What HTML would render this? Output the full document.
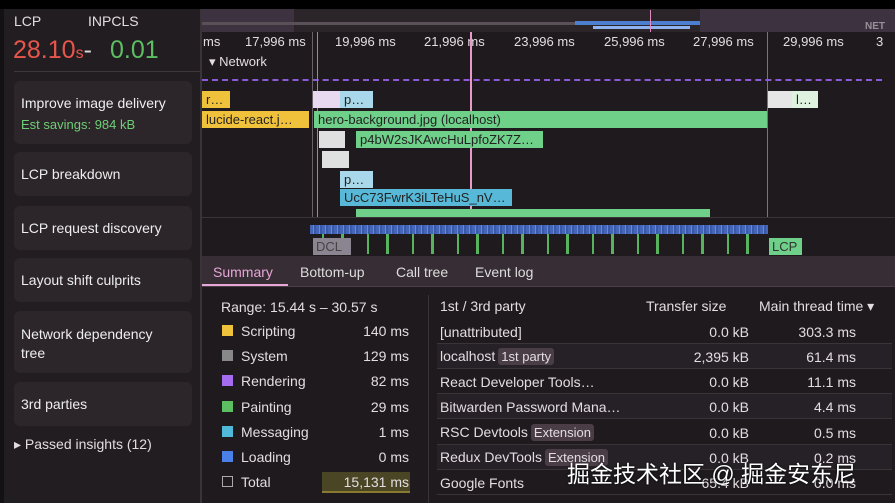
<!DOCTYPE html><html><head><meta charset="utf-8"><style>
*{margin:0;padding:0;box-sizing:border-box}
body{width:895px;height:503px;overflow:hidden;background:#1e1a1e;font-family:"Liberation Sans",sans-serif;color:#e3dde2;position:relative}
.a{position:absolute;white-space:nowrap}
.card{position:absolute;left:14px;width:178px;background:#2c2529;border-radius:6px;font-size:14px;color:#eee;padding:0 7px}
.bar{position:absolute;height:17px;font-size:13px;color:#222;padding-left:4px;line-height:17px;overflow:hidden;white-space:nowrap}
.sw{position:absolute;left:222px;width:11px;height:11px}
.lb{position:absolute;left:241px;font-size:14px}
.v{position:absolute;right:486px;font-size:14px}
.row{position:absolute;left:437px;width:455px;height:25px;border-bottom:1px solid #3a3338}
.row>span{position:absolute;top:5px;font-size:14px;white-space:nowrap}
.tag{position:static;background:#4a3d46;border-radius:3px;padding:1px 3px;font-size:13px;margin-left:3px}
</style></head><body>
<div class="a" style="left:0;top:0;width:895px;height:9px;background:#000"></div>
<div class="a" style="left:0;top:9px;width:4px;height:494px;background:#141114"></div>
<div class="a" style="left:4px;top:9px;width:197px;height:494px;background:#221d21"></div>
<div class="a" style="left:14px;top:13px;font-size:14px">LCP</div>
<div class="a" style="left:88px;top:13px;font-size:14px">INPCLS</div>
<div class="a" style="left:13px;top:36px;font-size:25px;color:#e8564b">28.10<span style="font-size:16px">s</span><span style="color:#ddd">-</span></div>
<div class="a" style="left:110px;top:36px;font-size:25px;color:#5cbf62">0.01</div>
<div class="a" style="left:14px;top:71px;width:186px;height:1px;background:#3d363b"></div>
<div class="card" style="top:81px;height:63px;padding-top:14px">Improve image delivery<div style="color:#6fcf77;margin-top:6px;font-size:13px">Est savings: 984 kB</div></div>
<div class="card" style="top:152px;height:44px;line-height:44px">LCP breakdown</div>
<div class="card" style="top:206px;height:44px;line-height:44px">LCP request discovery</div>
<div class="card" style="top:258px;height:44px;line-height:44px">Layout shift culprits</div>
<div class="card" style="top:311px;height:62px;padding-top:14px;line-height:19px">Network dependency<br>tree</div>
<div class="card" style="top:382px;height:44px;line-height:44px">3rd parties</div>
<div class="a" style="left:14px;top:436px;font-size:14px">▸ Passed insights (12)</div>
<div class="a" style="left:200px;top:9px;width:2px;height:494px;background:#3a3338"></div>
<div class="a" style="left:202px;top:9px;width:693px;height:23px;background:#2b2429"></div>
<div class="a" style="left:202px;top:9px;width:92px;height:23px;background:#3d3340"></div>
<div class="a" style="left:700px;top:9px;width:195px;height:23px;background:#3d3340"></div>
<div class="a" style="left:202px;top:22px;width:490px;height:3px;background:#5a5058"></div>
<div class="a" style="left:575px;top:21px;width:125px;height:4px;background:#4d7fd0"></div>
<div class="a" style="left:593px;top:26px;width:97px;height:3px;background:#8fb4f0"></div>
<div class="a" style="left:650px;top:10px;width:1px;height:22px;background:#e08cc0"></div>
<div class="a" style="left:865px;top:21px;font-size:10px;color:#9a8f98;font-weight:bold">NET</div>
<div class="a" style="left:202px;top:32px;width:693px;height:190px;background:#1e1a1e"></div>
<div class="a" style="left:203px;top:34px;font-size:13px">ms</div>
<div class="a" style="left:245px;top:34px;font-size:13px">17,996 ms</div>
<div class="a" style="left:335px;top:34px;font-size:13px">19,996 ms</div>
<div class="a" style="left:424px;top:34px;font-size:13px">21,996 ms</div>
<div class="a" style="left:514px;top:34px;font-size:13px">23,996 ms</div>
<div class="a" style="left:604px;top:34px;font-size:13px">25,996 ms</div>
<div class="a" style="left:693px;top:34px;font-size:13px">27,996 ms</div>
<div class="a" style="left:783px;top:34px;font-size:13px">29,996 ms</div>
<div class="a" style="left:876px;top:34px;font-size:13px">3</div>
<div class="a" style="left:209px;top:54px;font-size:13px">▾ Network</div>
<div class="a" style="left:202px;top:79px;width:680px;border-top:2px dashed #8a5ad8"></div>
<div class="a" style="left:312px;top:32px;width:1px;height:225px;background:#6a6068"></div>
<div class="a" style="left:317px;top:32px;width:1px;height:225px;background:#58b35e"></div>
<div class="a" style="left:470px;top:32px;width:2px;height:225px;background:#e89ac8"></div>
<div class="a" style="left:767px;top:32px;width:1px;height:225px;background:#777"></div>
<div class="bar" style="left:202px;top:91px;width:28px;background:#f0c23c">r…</div>
<div class="bar" style="left:313px;top:91px;width:27px;background:#e8d8f0"></div>
<div class="bar" style="left:340px;top:91px;width:33px;background:#a8d8ea">p…</div>
<div class="bar" style="left:202px;top:111px;width:107px;background:#f0c23c">lucide-react.j…</div>
<div class="bar" style="left:314px;top:111px;width:453px;background:#6fd08a">hero-background.jpg (localhost)</div>
<div class="bar" style="left:768px;top:91px;width:24px;background:#e6e6e6"></div>
<div class="bar" style="left:792px;top:91px;width:26px;background:#dff2df">l…</div>
<div class="bar" style="left:319px;top:131px;width:26px;background:#e0e0e0"></div>
<div class="bar" style="left:356px;top:131px;width:187px;background:#6fd08a">p4bW2sJKAwcHuLpfoZK7Z…</div>
<div class="bar" style="left:322px;top:151px;width:27px;background:#e0e0e0"></div>
<div class="bar" style="left:340px;top:171px;width:33px;background:#a8d8ea">p…</div>
<div class="bar" style="left:340px;top:189px;width:172px;background:#58b8d8">UcC73FwrK3iLTeHuS_nV…</div>
<div class="bar" style="left:356px;top:209px;width:354px;height:8px;background:#6fd08a"></div>
<div class="a" style="left:202px;top:217px;width:693px;height:5px;background:#1e1a1e;border-top:1px solid #3a3338"></div>
<div class="a" style="left:202px;top:222px;width:693px;height:34px;background:#1e1a1e"></div>
<div class="a" style="left:310px;top:225px;width:458px;height:9px;background:repeating-linear-gradient(90deg,#4466bb 0 3px,#6a88d8 3px 4px,#3a5aa8 4px 6px)"></div>
<div class="a" style="left:310px;top:234px;width:458px;height:20px;background:repeating-linear-gradient(90deg,transparent 0 12px,#58b35e 12px 14px,transparent 14px 31px,#58b35e 31px 34px,transparent 34px 45px)"></div>
<div class="a" style="left:313px;top:238px;width:38px;height:17px;background:#8a8590;color:#444;font-size:13px;line-height:17px;padding-left:3px">DCL</div>
<div class="a" style="left:769px;top:238px;width:33px;height:17px;background:#6fd08a;color:#333;font-size:13px;line-height:17px;padding-left:3px">LCP</div>
<div class="a" style="left:202px;top:256px;width:693px;height:31px;background:#372d35;border-bottom:1px solid #4a3f47"></div>
<div class="a" style="left:213px;top:264px;font-size:14px;color:#e6a6d6">Summary</div>
<div class="a" style="left:202px;top:284px;width:86px;height:2px;background:#e6a6d6"></div>
<div class="a" style="left:300px;top:264px;font-size:14px;color:#ddd">Bottom-up</div>
<div class="a" style="left:396px;top:264px;font-size:14px;color:#ddd">Call tree</div>
<div class="a" style="left:475px;top:264px;font-size:14px;color:#ddd">Event log</div>
<div class="a" style="left:428px;top:295px;width:1px;height:208px;background:#3a3338"></div>
<div class="a" style="left:221px;top:299px;font-size:14px">Range: 15.44 s – 30.57 s</div>
<div class="sw" style="top:325px;background:#f0c23c"></div><div class="lb" style="top:323px">Scripting</div><div class="v" style="top:323px">140 ms</div>
<div class="sw" style="top:350px;background:#888"></div><div class="lb" style="top:348px">System</div><div class="v" style="top:348px">129 ms</div>
<div class="sw" style="top:375px;background:#a66cf0"></div><div class="lb" style="top:373px">Rendering</div><div class="v" style="top:373px">82 ms</div>
<div class="sw" style="top:401px;background:#5cbf62"></div><div class="lb" style="top:399px">Painting</div><div class="v" style="top:399px">29 ms</div>
<div class="sw" style="top:426px;background:#50b8d8"></div><div class="lb" style="top:424px">Messaging</div><div class="v" style="top:424px">1 ms</div>
<div class="sw" style="top:451px;background:#4a80e8"></div><div class="lb" style="top:449px">Loading</div><div class="v" style="top:449px">0 ms</div>
<div class="sw" style="top:476px;border:1px solid #aaa"></div><div class="lb" style="top:474px">Total</div>
<div class="a" style="left:322px;top:472px;width:88px;height:21px;background:#4a4524;border-bottom:2px solid #8a7a30"></div><div class="v" style="top:474px">15,131 ms</div>
<div class="a" style="left:440px;top:298px;font-size:14px">1st / 3rd party</div>
<div class="a" style="left:646px;top:298px;font-size:14px">Transfer size</div>
<div class="a" style="left:759px;top:298px;font-size:14px">Main thread time ▾</div>
<div class="row" style="top:319px"><span style="left:3px">[unattributed]</span><span style="right:143px">0.0 kB</span><span style="right:36px">303.3 ms</span></div>
<div class="row" style="top:344px;background:#262126"><span style="left:3px;top:4px">localhost<span class="tag">1st party</span></span><span style="right:143px">2,395 kB</span><span style="right:36px">61.4 ms</span></div>
<div class="row" style="top:369px"><span style="left:3px">React Developer Tools…</span><span style="right:143px">0.0 kB</span><span style="right:36px">11.1 ms</span></div>
<div class="row" style="top:394px;background:#262126"><span style="left:3px">Bitwarden Password Mana…</span><span style="right:143px">0.0 kB</span><span style="right:36px">4.4 ms</span></div>
<div class="row" style="top:420px"><span style="left:3px;top:4px">RSC Devtools<span class="tag">Extension</span></span><span style="right:143px">0.0 kB</span><span style="right:36px">0.5 ms</span></div>
<div class="row" style="top:445px;background:#262126"><span style="left:3px;top:4px">Redux DevTools<span class="tag">Extension</span></span><span style="right:143px">0.0 kB</span><span style="right:36px">0.2 ms</span></div>
<div class="row" style="top:470px"><span style="left:3px">Google Fonts</span><span style="right:143px">65.4 kB</span><span style="right:36px">0.0 ms</span></div>
<div class="a" style="left:567px;top:455px;font-size:23px;color:#fff;font-family:'Liberation Sans','Noto Sans CJK SC',sans-serif;text-shadow:0 0 2px #000">掘金技术社区 @ 掘金安东尼</div>
</body></html>
